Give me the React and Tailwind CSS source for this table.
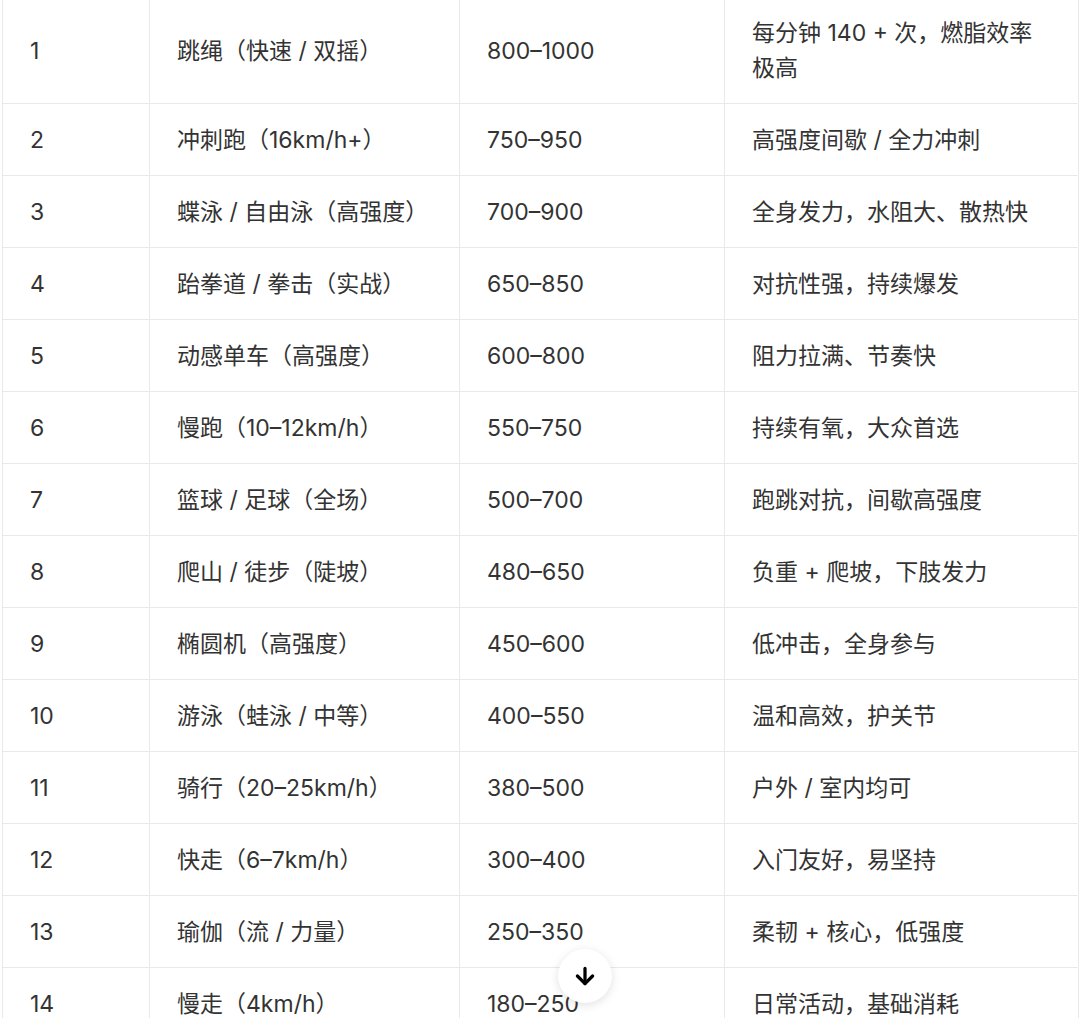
import { ArrowDown } from 'lucide-react';

const ROWS = [
  ['1', '跳绳（快速 / 双摇）', '800–1000', ['每分钟 140 + 次，燃脂效率', '极高']],
  ['2', '冲刺跑（16km/h+）', '750–950', ['高强度间歇 / 全力冲刺']],
  ['3', '蝶泳 / 自由泳（高强度）', '700–900', ['全身发力，水阻大、散热快']],
  ['4', '跆拳道 / 拳击（实战）', '650–850', ['对抗性强，持续爆发']],
  ['5', '动感单车（高强度）', '600–800', ['阻力拉满、节奏快']],
  ['6', '慢跑（10–12km/h）', '550–750', ['持续有氧，大众首选']],
  ['7', '篮球 / 足球（全场）', '500–700', ['跑跳对抗，间歇高强度']],
  ['8', '爬山 / 徒步（陡坡）', '480–650', ['负重 + 爬坡，下肢发力']],
  ['9', '椭圆机（高强度）', '450–600', ['低冲击，全身参与']],
  ['10', '游泳（蛙泳 / 中等）', '400–550', ['温和高效，护关节']],
  ['11', '骑行（20–25km/h）', '380–500', ['户外 / 室内均可']],
  ['12', '快走（6–7km/h）', '300–400', ['入门友好，易坚持']],
  ['13', '瑜伽（流 / 力量）', '250–350', ['柔韧 + 核心，低强度']],
  ['14', '慢走（4km/h）', '180–250', ['日常活动，基础消耗']],
];

const cell = 'flex flex-col justify-center pt-[19px] pb-[17px] pl-[27px] pr-[16px] border-r border-[#e9e9e9] whitespace-nowrap';

export default function App() {
  return (
    <div
      className="relative w-[1080px] h-[1032px] bg-white overflow-hidden text-[#333333]"
      style={{ fontFamily: 'Inter, "Noto Sans CJK SC", sans-serif' }}
    >
      <div className="h-[1018px] overflow-hidden">
        <div className="ml-[2px] w-[1076px] mt-[-3px] border-l border-[#e9e9e9]">
          {ROWS.map(([n, name, kcal, note]) => (
            <div key={n} className="grid grid-cols-[147px_310px_265px_354px] border-b border-[#e9e9e9] text-[23px] leading-[35px]">
              <div className={cell}>{n}</div>
              <div className={cell}>{name}</div>
              <div className={cell}>{kcal}</div>
              <div className={cell}>
                {note.map((l) => (
                  <span key={l}>{l}</span>
                ))}
              </div>
            </div>
          ))}
        </div>
      </div>
      <div className="absolute left-[558px] top-[949px] w-[54px] h-[54px] rounded-full bg-white shadow-[0_2px_10px_rgba(0,0,0,0.12)] flex items-center justify-center">
        <ArrowDown size={26} strokeWidth={3} className="text-black" />
      </div>
    </div>
  );
}
